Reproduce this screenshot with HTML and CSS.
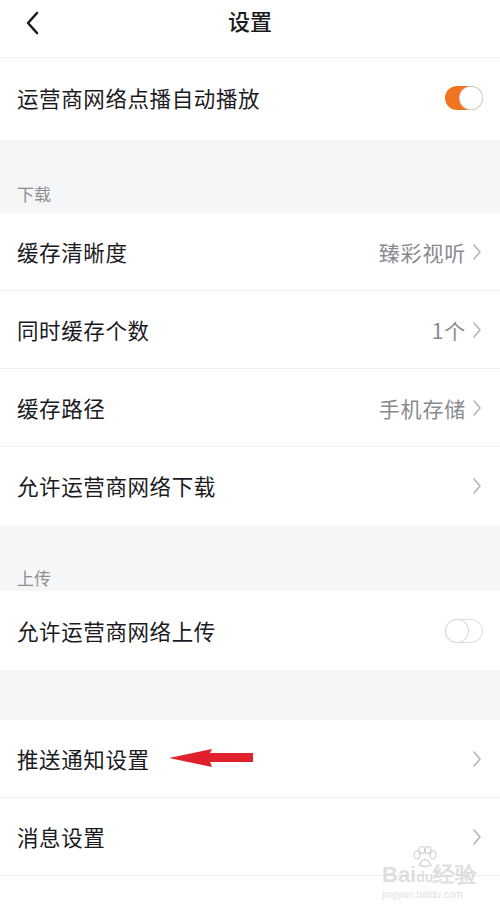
FILE: index.html
```html
<!DOCTYPE html>
<html lang="zh">
<head>
<meta charset="utf-8">
<title>设置</title>
<link rel="stylesheet" href="styles.css">
</head>
<body>
<div class="page">
  <header class="topbar">
    <svg class="back" width="16" height="26" viewBox="0 0 16 26"><path d="M13 3 L4 13 L13 23" fill="none" stroke="#1b1b1f" stroke-width="2.6" stroke-linecap="round" stroke-linejoin="round"/></svg>
    <h1 class="title">设置</h1>
  </header>

  <div class="row row-first">
    <span class="label">运营商网络点播自动播放</span>
    <span class="switch on"><span class="knob"></span></span>
  </div>

  <div class="section section-dl"><span>下载</span></div>
  <div class="row">
    <span class="label">缓存清晰度</span>
    <span class="value">臻彩视听<svg class="chev" width="10" height="18" viewBox="0 0 10 18"><path d="M2 2 L8 9 L2 16" fill="none" stroke="#b5b5b8" stroke-width="1.6" stroke-linecap="round" stroke-linejoin="round"/></svg></span>
  </div>
  <div class="row">
    <span class="label">同时缓存个数</span>
    <span class="value">1个<svg class="chev" width="10" height="18" viewBox="0 0 10 18"><path d="M2 2 L8 9 L2 16" fill="none" stroke="#b5b5b8" stroke-width="1.6" stroke-linecap="round" stroke-linejoin="round"/></svg></span>
  </div>
  <div class="row">
    <span class="label">缓存路径</span>
    <span class="value">手机存储<svg class="chev" width="10" height="18" viewBox="0 0 10 18"><path d="M2 2 L8 9 L2 16" fill="none" stroke="#b5b5b8" stroke-width="1.6" stroke-linecap="round" stroke-linejoin="round"/></svg></span>
  </div>
  <div class="row row-last">
    <span class="label">允许运营商网络下载</span>
    <span class="value"><svg class="chev" width="10" height="18" viewBox="0 0 10 18"><path d="M2 2 L8 9 L2 16" fill="none" stroke="#b5b5b8" stroke-width="1.6" stroke-linecap="round" stroke-linejoin="round"/></svg></span>
  </div>

  <div class="section section-ul"><span>上传</span></div>
  <div class="row row-last row-ul">
    <span class="label">允许运营商网络上传</span>
    <span class="switch off"><span class="knob"></span></span>
  </div>

  <div class="spacer"></div>
  <div class="row row-push">
    <span class="label">推送通知设置</span>
    <svg class="arrow" width="86" height="20" viewBox="0 0 86 20"><path d="M0 10 L43 1 L41 5 L84 5 L84 14 L41 14 L43 19 Z" fill="#e0202a"/></svg>
    <span class="value"><svg class="chev" width="10" height="18" viewBox="0 0 10 18"><path d="M2 2 L8 9 L2 16" fill="none" stroke="#b5b5b8" stroke-width="1.6" stroke-linecap="round" stroke-linejoin="round"/></svg></span>
  </div>
  <div class="row">
    <span class="label">消息设置</span>
    <span class="value"><svg class="chev" width="10" height="18" viewBox="0 0 10 18"><path d="M2 2 L8 9 L2 16" fill="none" stroke="#b5b5b8" stroke-width="1.6" stroke-linecap="round" stroke-linejoin="round"/></svg></span>
  </div>
  <div class="row row-tail"></div>

  <div class="watermark">
    <svg class="paw" width="26" height="22" viewBox="0 0 26 22"><g fill="none" stroke="rgba(190,190,196,0.6)" stroke-width="1.4"><ellipse cx="5" cy="9" rx="3" ry="4"/><ellipse cx="10" cy="4" rx="3" ry="3.5"/><ellipse cx="16" cy="4" rx="3" ry="3.5"/><ellipse cx="21" cy="9" rx="3" ry="4"/><path d="M7 19 Q13 8 19 19 Q13 22 7 19 Z"/></g></svg>
    <div class="wm-main">Bai<span class="wm-du">du</span>经验</div>
    <div class="wm-sub">jingyan.baidu.com</div>
  </div>
</div>
</body>
</html>
```

FILE: styles.css
```css
* { box-sizing: border-box; margin: 0; padding: 0; }
html, body { background: #ffffff; }
body {
  width: 500px;
  height: 904px;
  overflow: hidden;
  font-family: "Noto Sans CJK SC", "Noto Sans", sans-serif;
  color: #1b1b1f;
}
.page { position: relative; width: 500px; height: 904px; background: #f5f6f8; }

.topbar {
  height: 58px;
  background: #fff;
  border-bottom: 1px solid #efeff1;
  display: flex;
  align-items: center;
  justify-content: center;
  position: relative;
}
.back { position: absolute; left: 24px; top: 10px; }
.title { font-size: 22px; font-weight: 500; line-height: 1; margin-top: -18px; color: #1b1b1f; }

.row {
  height: 78px;
  background: #fff;
  display: flex;
  align-items: center;
  padding: 0 18px 0 17px;
  border-bottom: 1px solid #f0f0f2;
}
.row-first { height: 82px; border-bottom: none; padding-bottom: 2px; }
.row-last { border-bottom: none; }
.row-ul { height: 79px; }
.label { font-size: 21.5px; line-height: 1; flex: 1 0 auto; letter-spacing: 0.6px; }
.value {
  display: flex;
  align-items: center;
  font-size: 21px;
  color: #8a8a8e;
  letter-spacing: 0.8px;
}
.chev { margin-left: 6px; }

.switch {
  width: 38px;
  height: 24px;
  border-radius: 12px;
  position: relative;
  margin-right: -1px;
}
.switch.on { background: #f27420; }
.switch.off { background: #fff; border: 1px solid #dcdcde; }
.knob {
  position: absolute;
  top: 1px;
  width: 22px;
  height: 22px;
  border-radius: 50%;
  background: #fff;
  box-shadow: 0 0 0 1px #d8d8da;
}
.switch.on .knob { right: 1px; top: 1px; width: 22px; height: 22px; }
.switch.off .knob { left: 0; top: 0; }

.section {
  display: flex;
  align-items: flex-end;
  padding-left: 17px;
  font-size: 17px;
  color: #8e8e93;
}
.section-dl { height: 73px; padding-bottom: 7px; }
.section-ul { height: 66px; padding-bottom: 1px; }
.spacer { height: 50px; }

.row-push { position: relative; }
.arrow { position: absolute; left: 169px; top: 28px; }
.row-push .label { flex: 1 0 auto; }
.row-tail { height: 28px; border-bottom: none; }

.watermark {
  position: absolute;
  left: 382px;
  top: 848px;
  color: rgba(195, 195, 200, 0.55);
  font-family: "Liberation Sans", sans-serif;
}
.paw { position: absolute; left: 30px; top: -2px; }
.wm-main { font-size: 22px; font-weight: bold; line-height: 1; margin-top: 16px; }
.wm-du { font-size: 14px; }
.wm-sub { font-size: 10px; margin-top: 3px; }
```
